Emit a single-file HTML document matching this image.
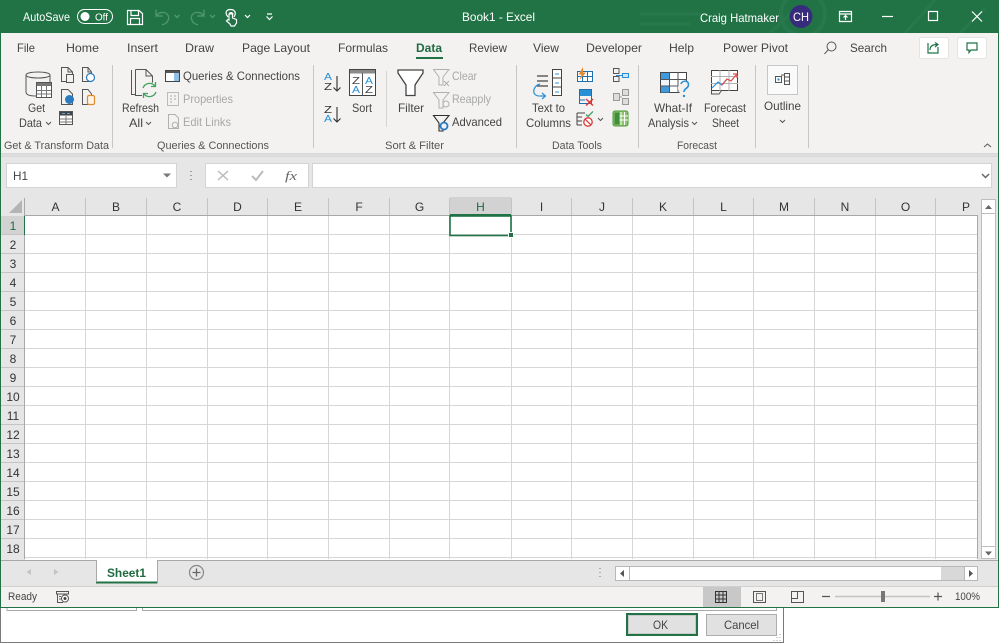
<!DOCTYPE html>
<html><head><meta charset="utf-8"><title>Book1 - Excel</title>
<style>
html,body{margin:0;padding:0;background:#fff;overflow:hidden}
svg{display:block}
text{font-family:"Liberation Sans",sans-serif;font-size:12px;fill:#444}
.w{fill:#fff}
.d{fill:#a8a8a8}
.g{fill:#555;font-size:11px}
.i{fill:none;stroke:#555;stroke-width:1}
.b{fill:none;stroke:#2b8fd6;stroke-width:1.2}
.l{fill:none;stroke:#2f2f2f;stroke-width:1.1}
.dis{fill:none;stroke:#b0b0b0;stroke-width:1}
.wi{fill:none;stroke:#fff;stroke-width:1.2}
.fa{fill:none;stroke:#4f9570;stroke-width:1.4}
.h{font-size:12px;fill:#333;text-anchor:middle}
</style></head>
<body>
<svg width="999" height="643" viewBox="0 0 999 643" xmlns="http://www.w3.org/2000/svg">
<rect width="999" height="643" fill="#fff"/>
<!-- title bar -->
<rect width="999" height="33" fill="#217346"/>
<path d="M640 14H700M640 24H690M770 33L790 14M905 33L935 0M960 33L985 8" stroke="#27784c" stroke-width="3" fill="none"/>
<circle cx="803" cy="14" r="22" fill="none" stroke="#27784c" stroke-width="4"/>
<text x="23" y="21" class="w" textLength="47" lengthAdjust="spacingAndGlyphs">AutoSave</text>
<rect x="77.500" y="9.500" width="35" height="14" rx="7" fill="none" stroke="#fff"/>
<circle cx="85" cy="16.500" r="4.500" fill="#fff"/>
<text x="95" y="20.500" class="w" style="font-size:10px" textLength="13" lengthAdjust="spacingAndGlyphs">Off</text>
<path class="wi" d="M127.500 10.500H139L142.500 13.500V24.500H127.500ZM131 10.500V15.500H138.500V10.500M130.500 24.500V18.500H139.500V24.500"/>
<path class="fa" d="M156 9.500V16H162.500M156 16C160 10 170 12 168.500 19C167.500 23 165 24 162 25"/>
<path class="fa" d="M174.500 15l2.500 2.500 2.500-2.500M210 15l2.500 2.500 2.500-2.500"/>
<path class="fa" d="M204 9.500V16H197.500M204 16C200 10 190 12 191.500 19C192.500 23 195 24 198 25"/>
<path class="wi" d="M228 17C224 12 227 9.500 230.500 9.500S237 12 234 17M229 14.500C229 12 233 12 233 14.500M230 24L226.500 21 228 19.500 229 20V14.500Q231 13 232.500 14.500V18L236.500 19.500V23L234.500 26H231Z"/>
<path class="wi" d="M245 15l2.500 2.500 2.500-2.500M267 14H272M266.500 16.500l3 3 3-3" stroke-width="1.500"/>
<text x="462" y="21" class="w" textLength="73" lengthAdjust="spacingAndGlyphs">Book1  -  Excel</text>
<text x="700" y="22" class="w" textLength="79" lengthAdjust="spacingAndGlyphs">Craig Hatmaker</text>
<circle cx="801" cy="16.500" r="11.500" fill="#372c7c"/>
<text x="793" y="21" class="w" textLength="16" lengthAdjust="spacingAndGlyphs">CH</text>
<path class="wi" d="M839.500 11.500H851.500V21.500H839.500ZM839.500 14H851.500M845.500 20V16M843.500 17.500L845.500 15.500 847.500 17.500"/>
<path class="wi" d="M882 16.500H893"/>
<rect x="928.500" y="11.500" width="9" height="9" fill="none" stroke="#fff" stroke-width="1.200"/>
<path class="wi" d="M972 11.500L982 21.500M982 11.500L972 21.500"/>

<!-- ribbon -->
<rect x="1" y="33" width="997" height="120" fill="#f3f2f1"/>
<g>
<text x="17" y="52" textLength="18" lengthAdjust="spacingAndGlyphs">File</text>
<text x="66" y="52" textLength="33" lengthAdjust="spacingAndGlyphs">Home</text>
<text x="127" y="52" textLength="31" lengthAdjust="spacingAndGlyphs">Insert</text>
<text x="185" y="52" textLength="29" lengthAdjust="spacingAndGlyphs">Draw</text>
<text x="242" y="52" textLength="68" lengthAdjust="spacingAndGlyphs">Page Layout</text>
<text x="338" y="52" textLength="50" lengthAdjust="spacingAndGlyphs">Formulas</text>
<text x="416" y="52" textLength="26" lengthAdjust="spacingAndGlyphs" style="fill:#1f6b41;font-weight:bold">Data</text>
<text x="469" y="52" textLength="38" lengthAdjust="spacingAndGlyphs">Review</text>
<text x="533" y="52" textLength="26" lengthAdjust="spacingAndGlyphs">View</text>
<text x="586" y="52" textLength="56" lengthAdjust="spacingAndGlyphs">Developer</text>
<text x="669" y="52" textLength="25" lengthAdjust="spacingAndGlyphs">Help</text>
<text x="723" y="52" textLength="65" lengthAdjust="spacingAndGlyphs">Power Pivot</text>
<text x="850" y="52" textLength="37" lengthAdjust="spacingAndGlyphs">Search</text>
</g>
<rect x="416" y="57" width="27" height="2" fill="#217346"/>
<circle cx="831.500" cy="46.500" r="4.500" class="i"/>
<path class="i" d="M824.500 54L828.300 49.700"/>
<rect x="919.500" y="37.500" width="29" height="21" rx="2" fill="#fff" stroke="#e3e3e3"/>
<path d="M928 43V53H938V47M930 50C930 46 933 44.500 937 44.500M935 42.500L938 44.500 935 47" fill="none" stroke="#217346" stroke-width="1.200"/>
<rect x="957.500" y="37.500" width="29" height="21" rx="2" fill="#fff" stroke="#e3e3e3"/>
<path d="M967 43H977V50H971L969 52.500V50H967Z" fill="none" stroke="#217346" stroke-width="1.200"/>

<!-- separators -->
<path d="M112.500 65V148M313.500 65V148M516.500 65V148M638.500 65V148M755.500 65V148M808.500 65V148" stroke="#c8c6c4"/>
<path d="M386.500 71V127" stroke="#d6d5d3"/>
<path d="M984 147L987.500 144 991 147" class="i"/>
<rect x="0" y="153" width="999" height="4" fill="#d8d8d8"/>
<rect x="0" y="154" width="999" height="2" fill="#dedede"/>

<!-- Get Data -->
<path class="i" d="M26 75V92C26 95 31 96 36 96M50 75V82M26 75C26 71 50 71 50 75C50 79 26 79 26 75Z"/>
<rect x="36.500" y="82.500" width="15" height="15" fill="#fff" stroke="#555"/>
<rect x="37" y="83" width="14" height="3" fill="#777"/>
<path d="M41.500 86V97M46.500 86V97M37 90.500H51M37 94H51" stroke="#777"/>
<text x="28" y="112" textLength="17" lengthAdjust="spacingAndGlyphs">Get</text>
<text x="19" y="127" textLength="23" lengthAdjust="spacingAndGlyphs">Data</text>
<path class="i" d="M46 122l2.500 2.500 2.500-2.500"/>
<!-- small docs -->
<path class="i" d="M61.500 67.500H68L72.500 72V81.500H61.500ZM68 67.500V72H72.500"/><rect x="66.500" y="74.500" width="7" height="8" fill="#f3f2f1" stroke="#555"/>
<path class="i" d="M82.500 67.500H88L91.500 72V81.500H82.500ZM88 67.500V72H91.500"/><circle cx="90.500" cy="77.500" r="4" fill="#fff" stroke="#2b7bc0" stroke-width="1.200"/>
<path class="i" d="M61.500 89.500H68L72.500 94V104.500H61.500Z"/><circle cx="69.500" cy="99.500" r="4.500" fill="#2b7bc0"/>
<path class="i" d="M82.500 89.500H88L91.500 94V104.500H82.500Z"/><rect x="87.500" y="95.500" width="7" height="9" rx="1.500" fill="#fdf3e7" stroke="#e08a2c" stroke-width="1.200"/>
<rect x="59.500" y="111.500" width="13" height="13" fill="#fff" stroke="#555"/><rect x="60" y="112" width="12" height="3.500" fill="#444"/><path d="M60 119H72M60 122H72M66 116V124" stroke="#777"/><path d="M62 113.500H65M67 113.500H70" stroke="#5fa8e0"/>

<!-- Refresh -->
<path class="i" d="M131.500 70V94.500H135M135.500 69.500H146L152.500 76V83M135.500 69.500V95.500H142M146 69.500V76H152.500"/>
<circle cx="149.500" cy="90" r="8" fill="#f3f2f1"/>
<path d="M143 88A7 7 0 0 1 155 86M156 92A7 7 0 0 1 144 94M155.500 82V86.500H151M143.500 98V93.500H148" fill="none" stroke="#3fa35f" stroke-width="1.300"/>
<text x="122" y="112" textLength="37" lengthAdjust="spacingAndGlyphs">Refresh</text>
<text x="129" y="127" textLength="14" lengthAdjust="spacingAndGlyphs">All</text>
<path class="i" d="M146 122l2.500 2.500 2.500-2.500"/>
<rect x="165.500" y="70.500" width="14" height="11" fill="#fff" stroke="#444"/><rect x="166" y="71" width="13" height="2" fill="#555"/><rect x="174" y="73" width="5" height="8" fill="#8fc1e6"/>
<text x="183" y="80" textLength="117" lengthAdjust="spacingAndGlyphs">Queries &amp; Connections</text>
<rect x="167.500" y="92.500" width="11" height="13" fill="#f3f2f1" stroke="#bbb"/><path d="M170 96h2M174 96h2M170 99h2M174 99h2M170 102h2" stroke="#aaa"/>
<text x="183" y="103" class="d" textLength="50" lengthAdjust="spacingAndGlyphs">Properties</text>
<path class="dis" d="M168.500 114.500H175L178.500 118V128.500H168.500Z"/><circle cx="175" cy="125" r="2.800" class="dis"/>
<text x="183" y="126" class="d" textLength="48" lengthAdjust="spacingAndGlyphs">Edit Links</text>
<text x="4" y="149" class="g" textLength="105" lengthAdjust="spacingAndGlyphs">Get &amp; Transform Data</text>
<text x="157" y="149" class="g" textLength="112" lengthAdjust="spacingAndGlyphs">Queries &amp; Connections</text>

<!-- Sort -->
<text x="324" y="80" style="font-size:10px;fill:#2b8fd6" textLength="8" lengthAdjust="spacingAndGlyphs">A</text>
<text x="324" y="90" style="font-size:10px;fill:#333" textLength="8" lengthAdjust="spacingAndGlyphs">Z</text>
<text x="324" y="113" style="font-size:10px;fill:#333" textLength="8" lengthAdjust="spacingAndGlyphs">Z</text>
<text x="324" y="122" style="font-size:10px;fill:#2b8fd6" textLength="8" lengthAdjust="spacingAndGlyphs">A</text>
<path class="l" d="M337 76V91M333.500 87.500L337 91 340.500 87.500M337 107V122M333.500 118.500L337 122 340.500 118.500"/>
<rect x="349.500" y="69.500" width="26" height="26" fill="#fff" stroke="#444"/>
<rect x="350" y="70" width="25" height="3.500" fill="#8a8a8a"/>
<path d="M362.500 73V95" stroke="#555"/>
<text x="352" y="84" style="font-size:10px;fill:#444" textLength="8" lengthAdjust="spacingAndGlyphs">Z</text>
<text x="352" y="93" style="font-size:10px;fill:#2b8fd6" textLength="8" lengthAdjust="spacingAndGlyphs">A</text>
<text x="365" y="84" style="font-size:10px;fill:#2b8fd6" textLength="8" lengthAdjust="spacingAndGlyphs">A</text>
<text x="365" y="93" style="font-size:10px;fill:#444" textLength="8" lengthAdjust="spacingAndGlyphs">Z</text>
<text x="352" y="112" textLength="20" lengthAdjust="spacingAndGlyphs">Sort</text>
<!-- Filter -->
<path d="M398 70H423V73L415 85V95.500H406V85L398 73Z" fill="#fff" stroke="#444" stroke-width="1.300"/>
<text x="398" y="112" textLength="26" lengthAdjust="spacingAndGlyphs">Filter</text>
<path class="dis" d="M433.500 69.500H449L443 77V85H439V77Z"/><path class="dis" d="M444 81L449 86M449 81L444 86"/>
<text x="452" y="80" class="d" textLength="25" lengthAdjust="spacingAndGlyphs">Clear</text>
<path class="dis" d="M433.500 92.500H449L443 100V108H439V100Z"/><circle cx="446" cy="104" r="3" class="dis"/>
<text x="452" y="103" class="d" textLength="39" lengthAdjust="spacingAndGlyphs">Reapply</text>
<path class="l" d="M433.500 115.500H449L443 123V131H439V123Z"/><circle cx="444" cy="126" r="3.500" fill="#f3f2f1" stroke="#2b7bc0" stroke-width="1.800"/>
<text x="452" y="126" textLength="50" lengthAdjust="spacingAndGlyphs">Advanced</text>
<text x="385" y="149" class="g" textLength="59" lengthAdjust="spacingAndGlyphs">Sort &amp; Filter</text>

<!-- Text to Columns -->
<path d="M537 76H548M537 81H548M537 86H548" stroke="#444" stroke-width="1.200"/>
<rect x="552.500" y="69.500" width="9" height="26" fill="#fff" stroke="#444"/><path d="M552 78H562M552 87H562" stroke="#444"/><path d="M555 74H559M555 83H559M555 92H559" stroke="#2b8fd6"/>
<path class="b" d="M540 84C532 86 531 97 541 96H545M542 93L545.500 96 542 99"/>
<text x="532" y="112" textLength="33" lengthAdjust="spacingAndGlyphs">Text to</text>
<text x="526" y="127" textLength="45" lengthAdjust="spacingAndGlyphs">Columns</text>
<!-- data tools -->
<rect x="577.500" y="71.500" width="15" height="10" fill="#fff" stroke="#1c6fb0"/><path d="M582.500 71V81M587.500 71V81M577 76.500H592" stroke="#1c6fb0"/><path d="M583 67L578.500 74.500H581.500L579.500 80L586 72.500H583Z" fill="#e8862a"/>
<rect x="579" y="89" width="13" height="7" fill="#2b8fd6"/><rect x="579.500" y="89.500" width="12" height="14" fill="none" stroke="#1c6fb0"/><path d="M579 100H585" stroke="#1c6fb0"/><path d="M586 99L593 105.500M593 99L586 105.500" stroke="#d93a3a" stroke-width="1.500"/>
<path d="M577 113H585M577 117H582M577 121H582M577 125H582M577 113V125" stroke="#444"/><path d="M586 114.500L588 116.500 593 111.500" stroke="#3fa35f" stroke-width="1.300" fill="none"/><circle cx="588" cy="122" r="4.200" fill="#fff" stroke="#d93a3a" stroke-width="1.300"/><path d="M585.300 119.300L590.700 124.700" stroke="#d93a3a" stroke-width="1.300"/>
<path class="i" d="M598 118l2.500 2.500 2.500-2.500"/>
<path class="i" d="M613.500 68.500H619V73.500H613.500ZM613.500 76.500H619V81.500H613.500Z"/><rect x="622.500" y="73.500" width="6" height="4" fill="#cfe6f7" stroke="#2b8fd6"/><path d="M616 75.500H622" stroke="#2b8fd6"/>
<rect x="613.500" y="93.500" width="6" height="7" fill="#ddd" stroke="#999"/><rect x="622.500" y="89.500" width="6" height="6" fill="#ddd" stroke="#999"/><rect x="622.500" y="98.500" width="6" height="6" fill="#ddd" stroke="#999"/><path d="M619 97H622" stroke="#999"/>
<rect x="613" y="111" width="15" height="15" rx="2" fill="#8dc26e" stroke="#4d9a3a"/><path d="M621 112V125M624.500 112V125M617 116H628M617 120H628" stroke="#fff"/><rect x="614.500" y="112.500" width="5" height="12" fill="#3f8f3a"/>
<text x="552" y="149" class="g" textLength="50" lengthAdjust="spacingAndGlyphs">Data Tools</text>

<!-- What-if -->
<rect x="660.500" y="72.500" width="26" height="20" fill="#fff" stroke="#444"/>
<rect x="661" y="73" width="9" height="6" fill="#3f9ade"/><rect x="661" y="86" width="9" height="6.500" fill="#3f9ade"/><rect x="661" y="79.500" width="9" height="6" fill="#eef6fc"/>
<path d="M660 79.500H687M660 86H687M669.500 72V93M678 72V93" stroke="#555"/>
<circle cx="685" cy="88" r="7" fill="#f3f2f1"/>
<path d="M681 84C682 80 689 80 688.500 85C688 89 684 88 684 92" fill="none" stroke="#2b8fd6" stroke-width="1.600"/><circle cx="684" cy="96" r="1.200" fill="#2b8fd6"/>
<text x="654" y="112" textLength="38" lengthAdjust="spacingAndGlyphs">What-If</text>
<text x="648" y="127" textLength="41" lengthAdjust="spacingAndGlyphs">Analysis</text>
<path class="i" d="M692 122l2.500 2.500 2.500-2.500"/>
<!-- forecast -->
<rect x="711.500" y="70.500" width="26" height="20" fill="#fff" stroke="#444"/>
<path d="M711 76.500H738M711 83.500H738M720 70V91M729 70V91" stroke="#b0b0b0"/>
<path d="M712 88L718 82 722 85 727 79" fill="none" stroke="#2b8fd6" stroke-width="1.200"/><path d="M722 85L727 79 731 81 737 74M733 74H737V78" fill="none" stroke="#e04a4a" stroke-width="1.200"/>
<path class="i" d="M711.500 90V94H719L722 90"/>
<text x="704" y="112" textLength="42" lengthAdjust="spacingAndGlyphs">Forecast</text>
<text x="712" y="127" textLength="27" lengthAdjust="spacingAndGlyphs">Sheet</text>
<text x="677" y="149" class="g" textLength="40" lengthAdjust="spacingAndGlyphs">Forecast</text>
<!-- outline -->
<rect x="767.500" y="65.500" width="30" height="29" fill="#fafafa" stroke="#c8c6c4"/>
<rect x="775.500" y="76.500" width="6" height="6" fill="none" stroke="#555"/><rect x="777.500" y="78.500" width="2" height="2" fill="#2b8fd6"/>
<rect x="784.500" y="73.500" width="5" height="11" fill="none" stroke="#555"/><path d="M784 77H790M784 81H790M781 75H784" stroke="#555"/>
<text x="764" y="110" textLength="37" lengthAdjust="spacingAndGlyphs">Outline</text>
<path class="i" d="M780 120l2.500 2.500 2.500-2.500"/>

<!-- formula bar -->
<rect x="1" y="157" width="997" height="40" fill="#e6e6e6"/>
<rect x="6.500" y="163.500" width="170" height="24" fill="#fff" stroke="#d4d4d4"/>
<text x="13" y="180" textLength="15" lengthAdjust="spacingAndGlyphs">H1</text>
<path d="M163 173.500H171L167 177.500Z" fill="#777"/>
<path d="M191 171v1M191 175v1M191 179v1" stroke="#888" stroke-width="1.500"/>
<rect x="205.500" y="163.500" width="103" height="24" fill="#fff" stroke="#d4d4d4"/>
<path d="M218 171L228 180M228 171L218 180" stroke="#bbb" stroke-width="1.500"/>
<path d="M252 176L256 180 263 171" stroke="#bbb" stroke-width="2" fill="none"/>
<text x="285" y="180" style="font-family:'Liberation Serif',serif;font-style:italic;font-size:13px;fill:#666" textLength="12" lengthAdjust="spacingAndGlyphs">fx</text>
<rect x="312.500" y="163.500" width="679" height="24" fill="#fff" stroke="#d4d4d4"/>
<path d="M982 174l3.500 3.500 3.500-3.500" stroke="#666" stroke-width="1.500" fill="none"/>

<!-- headers -->
<rect x="1" y="197" width="997" height="19" fill="#e6e6e6"/>
<rect x="1" y="215" width="24" height="345" fill="#e6e6e6"/>
<rect x="25" y="216" width="952" height="343" fill="#fff"/>
<path d="M22 200V213H9Z" fill="#b4b4b4"/>
<rect x="450" y="197" width="61" height="18" fill="#d2d2d2"/>
<rect x="1" y="216" width="24" height="19" fill="#d2d2d2"/>
<!-- gridlines -->
<path stroke="#d6d6d6" fill="none" d="M85.500 216V559M146.500 216V559M207.500 216V559M267.500 216V559M328.500 216V559M389.500 216V559M449.500 216V559M511.500 216V559M571.500 216V559M632.500 216V559M693.500 216V559M753.500 216V559M814.500 216V559M875.500 216V559M935.500 216V559
M25 234.500H977M25 253.500H977M25 272.500H977M25 291.500H977M25 310.500H977M25 329.500H977M25 348.500H977M25 367.500H977M25 386.500H977M25 405.500H977M25 424.500H977M25 443.500H977M25 462.500H977M25 481.500H977M25 500.500H977M25 519.500H977M25 538.500H977M25 557.500H977"/>
<path stroke="#c4c4c4" fill="none" d="M85.500 198V215M146.500 198V215M207.500 198V215M267.500 198V215M328.500 198V215M389.500 198V215M449.500 198V215M511.500 198V215M571.500 198V215M632.500 198V215M693.500 198V215M753.500 198V215M814.500 198V215M875.500 198V215M935.500 198V215M1 234.500H24M1 253.500H24M1 272.500H24M1 291.500H24M1 310.500H24M1 329.500H24M1 348.500H24M1 367.500H24M1 386.500H24M1 405.500H24M1 424.500H24M1 443.500H24M1 462.500H24M1 481.500H24M1 500.500H24M1 519.500H24M1 538.500H24"/>
<path stroke="#a8a8a8" fill="none" d="M25 215.500H977.500V559M24.500 198V559"/>
<g>
<text x="55.500" y="211" class="h">A</text><text x="116" y="211" class="h">B</text><text x="177" y="211" class="h">C</text><text x="237.500" y="211" class="h">D</text><text x="298" y="211" class="h">E</text><text x="359" y="211" class="h">F</text><text x="419.500" y="211" class="h">G</text>
<text x="480.500" y="211" class="h" style="fill:#1f6b41">H</text>
<text x="541.500" y="211" class="h">I</text><text x="602" y="211" class="h">J</text><text x="663" y="211" class="h">K</text><text x="723.500" y="211" class="h">L</text><text x="784" y="211" class="h">M</text><text x="845" y="211" class="h">N</text><text x="905.500" y="211" class="h">O</text><text x="966" y="211" class="h">P</text>
<text x="13" y="230" class="h" style="fill:#1f6b41">1</text><text x="13" y="249" class="h">2</text><text x="13" y="268" class="h">3</text><text x="13" y="287" class="h">4</text><text x="13" y="306" class="h">5</text><text x="13" y="325" class="h">6</text><text x="13" y="344" class="h">7</text><text x="13" y="363" class="h">8</text><text x="13" y="382" class="h">9</text><text x="13" y="401" class="h">10</text><text x="13" y="420" class="h">11</text><text x="13" y="439" class="h">12</text><text x="13" y="458" class="h">13</text><text x="13" y="477" class="h">14</text><text x="13" y="496" class="h">15</text><text x="13" y="515" class="h">16</text><text x="13" y="534" class="h">17</text><text x="13" y="553" class="h">18</text>
</g>
<rect x="450" y="214" width="61" height="2" fill="#217346"/>
<rect x="24" y="216" width="1" height="19" fill="#217346"/>
<rect x="450" y="216" width="61" height="19.500" fill="none" stroke="#217346" stroke-width="1.600"/>
<rect x="508.500" y="232.500" width="5" height="5" fill="#217346" stroke="#fff"/>
<!-- v scrollbar -->
<rect x="978" y="197" width="20" height="363" fill="#e6e6e6"/>
<rect x="981.500" y="199.500" width="14" height="359" fill="#fff" stroke="#bdbdbd"/>
<path d="M981 213.500H996M981 546.500H996" stroke="#bdbdbd"/>
<path d="M985 209L988.500 205 992 209ZM985 551.500L988.500 555.500 992 551.500Z" fill="#666"/>

<!-- sheet tabs -->
<rect x="1" y="560" width="997" height="27" fill="#e6e6e6"/>
<path d="M1 560.500H998" stroke="#a8a8a8"/>
<path d="M96.500 560V582.500H157V560Z" fill="#fff"/>
<path d="M96 582.500H157.500" stroke="#217346" stroke-width="2" fill="none"/>
<path d="M96.500 560V582M157.500 560V582" stroke="#a8a8a8"/>
<rect x="97" y="559" width="60" height="3" fill="#fff"/>
<text x="107" y="577" style="fill:#1f6b41;font-weight:bold" textLength="39" lengthAdjust="spacingAndGlyphs">Sheet1</text>
<path d="M31 569V575L26.500 572ZM54 569V575L58.500 572Z" fill="#c4c4c4"/>
<circle cx="196.500" cy="572.500" r="7" fill="none" stroke="#888" stroke-width="1.200"/>
<path d="M192.500 572.500H200.500M196.500 568.500V576.500" stroke="#666" stroke-width="1.300"/>
<path d="M600 568v1M600 572v1M600 576v1" stroke="#999" stroke-width="1.500"/>
<rect x="615.500" y="566.500" width="362" height="14" fill="#d8d8d8" stroke="#b8b8b8"/>
<rect x="616" y="567" width="13" height="13" fill="#fff"/><rect x="630" y="567" width="311" height="13" fill="#fff"/><rect x="965" y="567" width="12" height="13" fill="#fff"/>
<path d="M629.500 567V580M964.500 567V580" stroke="#b8b8b8"/>
<path d="M624 570V577L620 573.500ZM969 570V577L973 573.500Z" fill="#555"/>

<!-- status bar -->
<rect x="1" y="587" width="997" height="20" fill="#f3f2f1"/>
<path d="M1 586.500H998" stroke="#d0d0d0"/>
<rect x="0" y="607" width="999" height="1" fill="#217346"/>
<rect x="0" y="33" width="1" height="575" fill="#217346"/>
<rect x="998" y="33" width="1" height="575" fill="#217346"/>
<text x="8" y="600" style="font-size:11px" textLength="29" lengthAdjust="spacingAndGlyphs">Ready</text>
<path class="i" d="M56.500 591.500H68.500V594H56.500ZM57.500 594V602.500H63"/><path d="M59 596.500h2M59 599h2" stroke="#666"/><circle cx="65" cy="598.500" r="3.500" fill="#fff" stroke="#555"/><circle cx="65" cy="598.500" r="1.500" fill="#444"/>
<rect x="703" y="587" width="38" height="20" fill="#c8c8c8"/>
<rect x="715.500" y="591.500" width="11" height="11" fill="none" stroke="#333"/><path d="M719 591V603M723 591V603M715 595H727M715 599H727" stroke="#333"/>
<rect x="753.500" y="591.500" width="12" height="11" fill="none" stroke="#555"/><rect x="756.500" y="593.500" width="6" height="7" fill="none" stroke="#777"/>
<path class="i" d="M791.500 591.500H803.500V602.500H791.500ZM797.500 591.500V598.500H791.500"/>
<path d="M822 596.500H830M934 596.500H942M938 592.500V600.500" stroke="#555" stroke-width="1.200"/>
<path d="M835 596.500H930" stroke="#c4c4c4" stroke-width="1.500"/>
<rect x="881" y="591" width="4" height="11" fill="#777"/>
<text x="955" y="600" style="font-size:11px" textLength="25" lengthAdjust="spacingAndGlyphs">100%</text>

<!-- dialog remnants -->
<rect x="0" y="608" width="1" height="35" fill="#7a7a7a"/>
<path d="M7 608V610.500H136.500V608M142.500 608V610.500H776.500V608" stroke="#a8a8a8" fill="none"/>
<path d="M783.500 608V642.500H0" stroke="#7a7a7a" fill="none"/>
<rect x="627" y="614" width="70" height="21" fill="#e1e1e1" stroke="#217346" stroke-width="2"/>
<rect x="628.500" y="615.500" width="67" height="18" fill="none" stroke="#c8c8c8"/>
<text x="653" y="629" textLength="15" lengthAdjust="spacingAndGlyphs">OK</text>
<rect x="706.500" y="614.500" width="70" height="21" fill="#e1e1e1" stroke="#adadad"/>
<text x="724" y="629" textLength="35" lengthAdjust="spacingAndGlyphs">Cancel</text>
<path d="M780 634v1M777 637v1M780 637v1M774 640v1M777 640v1M780 640v1" stroke="#aaa"/>
</svg>
</body></html>
